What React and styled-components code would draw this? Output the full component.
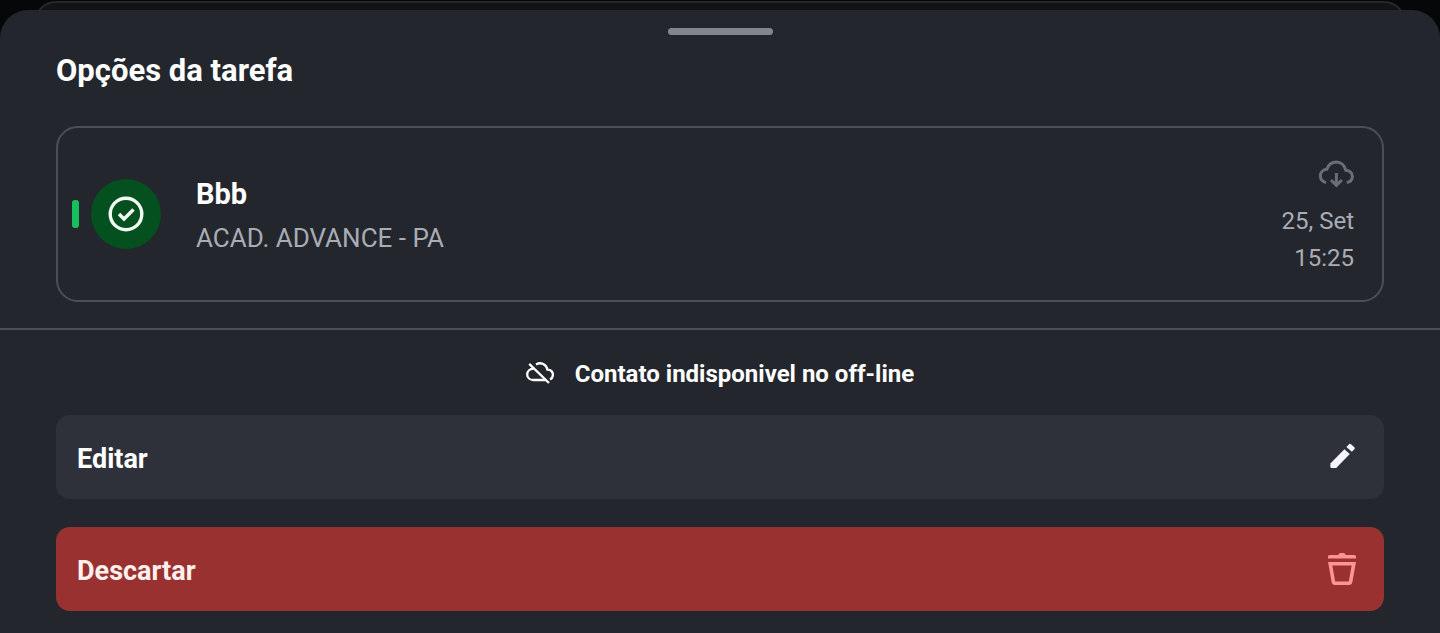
import React from 'react'
import styled, { createGlobalStyle } from "styled-components";

function CheckIcon() {
    return (
        <svg width="36" height="36" viewBox="0 0 36 36" fill="none" stroke="#f1fdf4" strokeWidth="3.4" aria-hidden="true">
            <circle cx="18" cy="18" r="15.8" />
            <path d="M11 18l5 5 9.5-9.5" />
        </svg>
    )
}

function CloudDownloadIcon() {
    return (
        <svg width="36" height="28" viewBox="0 0 36 28" fill="none" stroke="#6b6e76" strokeWidth="3" aria-hidden="true">
            <path d="M8 22.6C4.8 21.8 2.4 19.2 2.4 15.8C2.4 12.2 5 9.6 8.8 9.2C10.4 4.8 14 2 18.4 2C23 2 26.6 5.4 27.8 10.2C31.6 10.6 34.4 13 34.4 16.6C34.4 19.6 32.4 22 28.8 22.6" />
            <path d="M18.4 13v12M13 20l5.4 5.4 5.4-5.4" />
        </svg>
    )
}

function CloudOffIcon() {
    return (
        <svg width="28" height="24" viewBox="0 0 28 24" fill="none" stroke="#fff" strokeWidth="2.3" aria-hidden="true">
            <path d="M7.6 6.6C4 6.8 1.2 9 1.2 12.4C1.2 15.8 4 18 7.4 18H19.6" />
            <path d="M10 2.4C15 -0.4 20.4 2.2 21.4 7.6C24.8 7.8 26.9 9.8 26.9 12.8C26.9 15 25.8 16.6 24 17.4" />
            <path d="M3.2 1.8L23 21" />
        </svg>
    )
}

function PencilIcon() {
    return (
        <svg width="28" height="32" viewBox="0 0 28 32" fill="#f4f6fb" aria-hidden="true">
            <path d="M2.4 22.4L16.4 8.2L21.8 13L8.2 27H3.4Q2.4 27 2.4 26Z" />
            <path d="M18.4 6L21 3.2Q22 2.2 23 3.2L26.4 6.2Q27.2 7.2 26.4 8.2L23.8 10.8Z" />
        </svg>
    )
}

function TrashIcon() {
    return (
        <svg width="28" height="32" viewBox="0 0 28 32" aria-hidden="true">
            <path d="M0 5.6V3.6Q0 2 1.6 2H10.4Q10.8 0 12.4 0H15.6Q17.2 0 17.6 2H26.4Q28 2 28 3.6V5.6Z" fill="#ff9494" />
            <path d="M2.2 10.8H25.8L22.6 28.8Q22.4 30.3 20.8 30.3H7.2Q5.6 30.3 5.4 28.8Z" fill="none" stroke="#ff9494" strokeWidth="3.6" />
        </svg>
    )
}

function TaskCard({ title, place, date, time }) {
    return (
        <Card>
            <StatusBar />
            <StatusCircle>
                <CheckIcon />
            </StatusCircle>
            <TaskText>
                <h2>{ title }</h2>
                <p>{ place }</p>
            </TaskText>
            <TaskMeta>
                <CloudDownloadIcon />
                <p>{ date }</p>
                <p>{ time }</p>
            </TaskMeta>
        </Card>
    )
}

function App() {
    return (
        <Screen>
            <GlobalStyle />
            <BackCard />
            <Sheet>
                <Handle />
                <Title>Opções da tarefa</Title>
                <TaskCard
                    title="Bbb"
                    place="ACAD. ADVANCE - PA"
                    date="25, Set"
                    time="15:25"
                />
                <Divider />
                <Notice>
                    <CloudOffIcon />
                    Contato indisponivel no off-line
                </Notice>
                <Actions>
                    <ActionButton type="button">
                        <span>Editar</span>
                        <PencilIcon />
                    </ActionButton>
                    <ActionButton type="button" $danger>
                        <span>Descartar</span>
                        <TrashIcon />
                    </ActionButton>
                </Actions>
            </Sheet>
        </Screen>
    )
}

export default App

const GlobalStyle = createGlobalStyle`
    * {
      box-sizing: border-box;
      margin: 0;
    }
    body {
      background-color: #050709;
      font-family: Roboto, sans-serif;
      color: white;
    }
    svg {
      display: block;
      flex-shrink: 0;
    }
`
const Screen = styled.div`
    position: relative;
    min-height: 100vh;
    padding-top: 10px;
    display: flex;
    flex-direction: column;
`
// card of the list that stays behind the sheet
const BackCard = styled.div`
    position: absolute;
    top: 1px;
    left: 34px;
    right: 34px;
    height: 60px;
    border: 2px solid #26282b;
    border-radius: 22px;
    background-color: #121316;
`
const Sheet = styled.main`
    position: relative;
    flex: 1;
    display: flex;
    flex-direction: column;
    padding: 18px 0 22px;
    border-radius: 28px 28px 0 0;
    background-color: #23262d;
`
const Handle = styled.div`
    width: 105px;
    height: 7px;
    border-radius: 4px;
    align-self: center;
    background-color: #82858e;
`
const Title = styled.h1`
    margin: 18px 56px 37px;
    font-size: 31px;
    line-height: 36px;
    font-weight: 700;
`
const Card = styled.section`
    display: flex;
    align-items: center;
    min-height: 176px;
    margin: 0 56px;
    padding: 0 28px 0 14px;
    border: 2px solid #4c4f57;
    border-radius: 22px;
`
const StatusBar = styled.div`
    width: 7px;
    height: 28px;
    margin-right: 12px;
    border-radius: 3px;
    background-color: #17c05c;
`
const StatusCircle = styled.div`
    width: 70px;
    height: 70px;
    border-radius: 50%;
    display: flex;
    justify-content: center;
    align-items: center;
    background-color: #04501e;
`
const TaskText = styled.div`
    flex: 1;
    margin-left: 35px;
    padding-top: 4px;
    h2 {
      font-size: 29px;
      line-height: 44px;
      font-weight: 700;
    }
    p {
      font-size: 26px;
      line-height: 44px;
      color: #a9acb5;
    }
`
const TaskMeta = styled.div`
    display: flex;
    flex-direction: column;
    align-items: flex-end;
    padding-top: 9px;
    svg {
      margin-bottom: 15px;
    }
    p {
      font-size: 24px;
      line-height: 37px;
      color: #a9acb5;
    }
`
const Divider = styled.hr`
    height: 2px;
    margin-top: 26px;
    border: 0;
    background-color: #4c4f57;
`
const Notice = styled.p`
    display: flex;
    justify-content: center;
    align-items: center;
    gap: 21px;
    margin: 28px 56px 25px;
    font-size: 24px;
    line-height: 32px;
    font-weight: 700;
`
const Actions = styled.div`
    display: flex;
    flex-direction: column;
    gap: 28px;
    padding: 0 56px;
`
const ActionButton = styled.button`
    display: flex;
    justify-content: space-between;
    align-items: center;
    height: 84px;
    padding: 0 28px 0 21px;
    border: 0;
    border-radius: 14px;
    font-family: inherit;
    font-size: 27px;
    font-weight: 700;
    color: ${props => props.$danger ? '#fff0ee' : 'white'};
    background-color: ${props => props.$danger ? '#993131' : '#2e3139'};
    cursor: pointer;
    span {
      padding-top: 4px;
    }
`
